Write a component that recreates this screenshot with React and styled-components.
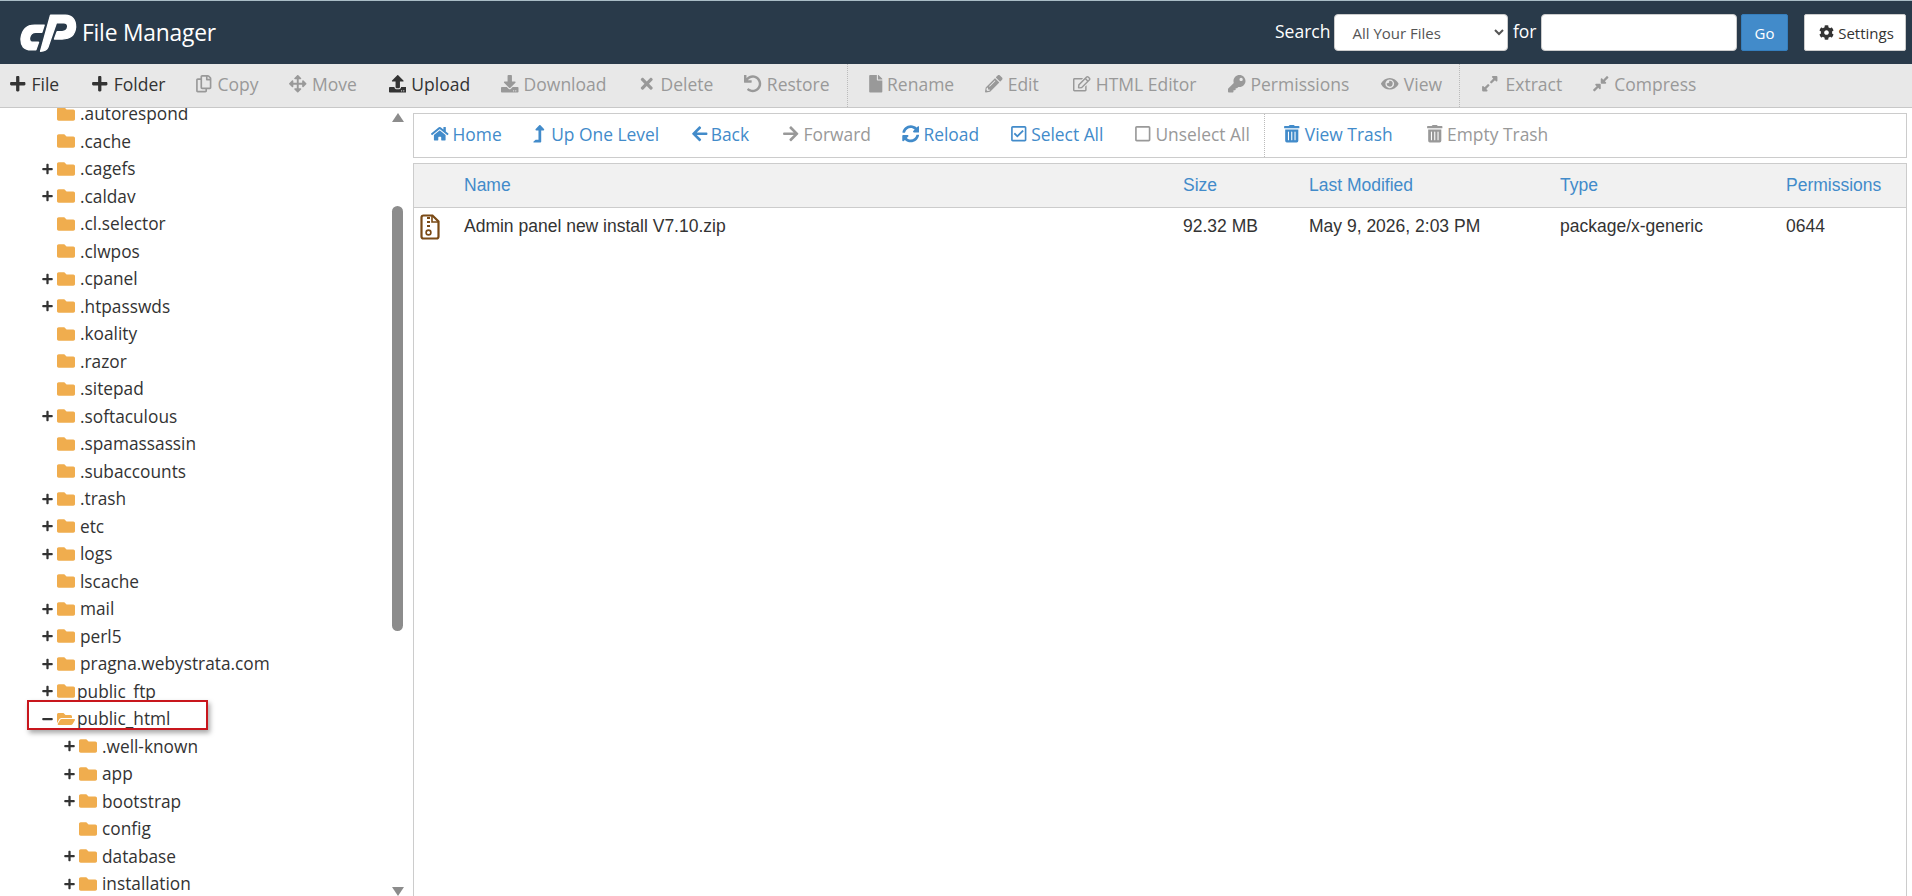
import React from "react";
import styled, { createGlobalStyle } from "styled-components";
import {
  FaArrowLeft,
  FaArrowRight,
  FaArrowsAlt,
  FaCog,
  FaCompressAlt,
  FaDownload,
  FaExpandAlt,
  FaEye,
  FaFile,
  FaFolder,
  FaFolderOpen,
  FaHome,
  FaKey,
  FaLevelUpAlt,
  FaMinus,
  FaPencilAlt,
  FaPlus,
  FaRegCheckSquare,
  FaRegCopy,
  FaRegEdit,
  FaRegSquare,
  FaSyncAlt,
  FaTimes,
  FaTrashAlt,
  FaUndo,
  FaUpload,
} from "react-icons/fa";

const GlobalStyle = createGlobalStyle`
  html, body { margin: 0; padding: 0; height: 100%; background: #fff; overflow: hidden; }
  body { font-family: "Open Sans", "Liberation Sans", sans-serif; color: #333; }
`;

const Page = styled.div`
  height: 896px;
  display: flex;
  flex-direction: column;
  overflow: hidden;
`;

const Header = styled.header`
  height: 64px;
  box-sizing: border-box;
  flex: none;
  display: flex;
  align-items: center;
  padding: 0 6px 0 20px;
  background: #293a4a;
  border-top: 1px solid #a9bcc6;
  color: #fff;
`;

const Title = styled.h1`
  margin: 0 0 0 5px;
  font-size: 22.8px;
  font-weight: 400;
  letter-spacing: -0.2px;
`;

const SearchForm = styled.div`
  margin-left: auto;
  display: flex;
  align-items: center;
  font-size: 17.5px;
`;

const SearchLabel = styled.span`
  margin: ${(p) => p.$margin};
  position: relative;
  top: -2px;
`;

const ScopeSelect = styled.select`
  width: 174px;
  height: 37px;
  box-sizing: border-box;
  padding: 0 6px 0 13px;
  background: #fff;
  border: 1px solid #ccc;
  border-radius: 4px;
  color: #555;
  font: 15px "Open Sans", sans-serif;
`;

const SearchInput = styled.input`
  width: 196px;
  height: 37px;
  box-sizing: border-box;
  background: #fff;
  border: 1px solid #ccc;
  border-radius: 4px;
`;

const GoButton = styled.button`
  width: 47px;
  height: 37px;
  margin-left: 4px;
  background: #428bca;
  border: 1px solid #357ebd;
  border-radius: 2px;
  color: #fff;
  font: 15px "Open Sans", sans-serif;
`;

const SettingsButton = styled.button`
  width: 102px;
  height: 37px;
  margin-left: 16px;
  padding-left: 9px;
  display: flex;
  align-items: center;
  justify-content: center;
  gap: 4px;
  background: #fff;
  border: 1px solid #ccc;
  border-radius: 2px;
  color: #333;
  font: 15px "Open Sans", sans-serif;
`;

const Toolbar = styled.nav`
  height: 44px;
  box-sizing: border-box;
  flex: none;
  display: flex;
  align-items: center;
  padding: 0 0 0 9px;
  background: #e8e8e8;
  border-bottom: 1px solid #c8c8c8;
`;

const ToolButton = styled.button`
  height: 100%;
  padding: 0 0 3px;
  margin-right: ${(p) => p.$gap}px;
  display: flex;
  align-items: center;
  gap: ${(p) => p.$iconGap ?? 5}px;
  background: none;
  border: 0;
  color: ${(p) => (p.disabled ? "#999" : "#333")};
  font: 17.5px "Open Sans", sans-serif;
  svg { font-size: 17.5px; flex: none; }
`;

const ToolDivider = styled.span`
  align-self: stretch;
  width: 0;
  margin: 0 ${(p) => p.$after}px 0 0;
  border-left: 1px dotted #bbb;
`;

const Workspace = styled.div`
  flex: 1;
  min-height: 0;
  display: flex;
`;

const TreePane = styled.aside`
  position: relative;
  width: 387px;
  flex: none;
  overflow: hidden;
`;

const TreeList = styled.ul`
  list-style: none;
  margin: -8px 0 0;
  padding: 0;
`;

const TreeRow = styled.li`
  height: 27.5px;
  display: flex;
  align-items: center;
  padding-left: ${(p) => 42 + p.$depth * 22}px;
  font-size: 17.3px;
  white-space: nowrap;
`;

const Toggle = styled.span`
  width: 11px;
  margin-right: 4px;
  flex: none;
  display: flex;
  color: #333;
  font-size: 12px;
`;

const FolderGlyph = styled.span`
  width: 18px;
  margin-right: ${(p) => (p.$tight ? 2 : 5)}px;
  flex: none;
  display: flex;
  color: #f0ad4e;
  font-size: 18px;
`;

const Highlight = styled.div`
  position: absolute;
  left: 27px;
  top: 592px;
  width: 181px;
  height: 30px;
  box-sizing: border-box;
  border: 2px solid #c8161d;
  box-shadow: 2px 3px 5px rgba(0, 0, 0, 0.35);
`;

const ScrollRail = styled.div`
  width: 21px;
  flex: none;
  display: flex;
  flex-direction: column;
  align-items: center;
  background: #fff;
`;

const ScrollArrow = styled.span`
  width: 0;
  height: 0;
  margin: ${(p) => (p.$down ? "auto 0 0" : "5px 0 0")};
  border-left: 6.5px solid transparent;
  border-right: 6.5px solid transparent;
  border-${(p) => (p.$down ? "top" : "bottom")}: 9px solid #8c8c8c;
`;

const ScrollThumb = styled.span`
  width: 11px;
  height: 425px;
  margin-top: 84px;
  background: #8c8c8c;
  border-radius: 5.5px;
`;

const Main = styled.main`
  flex: 1;
  min-width: 0;
  padding: 5px 5px 0;
  display: flex;
  flex-direction: column;
  gap: 5px;
`;

const Breadcrumb = styled.div`
  height: 45px;
  box-sizing: border-box;
  flex: none;
  display: flex;
  align-items: center;
  padding-left: 17px;
  border: 1px solid #ccc;
`;

const CrumbLink = styled.a`
  height: 100%;
  box-sizing: border-box;
  padding-bottom: 3px;
  margin-right: ${(p) => p.$gap}px;
  display: flex;
  align-items: center;
  gap: ${(p) => p.$iconGap ?? 4}px;
  color: ${(p) => (p.$off ? "#999" : "#428bca")};
  font-size: 17.4px;
  svg { font-size: 17.5px; flex: none; }
`;

const FileTable = styled.div`
  flex: 1;
  border: 1px solid #ccc;
  border-bottom: 0;
  font-family: "Liberation Sans", Arial, sans-serif;
  font-size: 17.5px;
`;

const Columns = styled.div`
  display: grid;
  grid-template-columns: 50px 719px 126px 251px 226px 1fr;
  align-items: center;
`;

const HeadRow = styled(Columns)`
  height: 43px;
  background: #f1f1f1;
  border-bottom: 1px solid #ccc;
  color: #428bca;
`;

const FileRow = styled(Columns)`
  height: 38px;
  padding-bottom: 2px;
  box-sizing: border-box;
  color: #333;
`;

const FileIcon = styled.svg`
  width: 20px;
  height: 26px;
  margin: 1px 0 0 6px;
  color: #7a4a16;
`;

const CpanelLogo = () => (
  <svg width="57" height="40" viewBox="28 26 172 116" fill="#fff" stroke="#fff" strokeWidth="4" strokeLinejoin="round" aria-label="cPanel">
    <path d="M101 60 L72 60 Q36 60 31 100 Q29 135 62 135 L76 135 L84 112 L68 112 Q55 112 57 98 Q60 82 76 82 L94 82 Z" />
    <path d="M120 30 L165 30 Q196 32 196 66 Q193 102 155 102 L132 102 L140 80 L155 80 Q170 80 172 65 Q172 53 160 53 L138 53 L112 128 Q107 139 90 139 Z" />
  </svg>
);

const ZipIcon = () => (
  <FileIcon viewBox="0 0 20 26">
    <path d="M1.5 3.5 Q1.5 1.5 3.5 1.5 L12.5 1.5 L18.5 7.5 L18.5 22.5 Q18.5 24.5 16.5 24.5 L3.5 24.5 Q1.5 24.5 1.5 22.5 Z" fill="#fff" stroke="currentColor" strokeWidth="2.2" />
    <path d="M12 2 L12 8 L18 8" fill="none" stroke="currentColor" strokeWidth="1.6" />
    <path d="M7 3 h3 v2 h-3 z M7 7 h3 v2 h-3 z M7 11 h3 v2 h-3 z" fill="currentColor" />
    <circle cx="8.5" cy="18.5" r="2.4" fill="none" stroke="currentColor" strokeWidth="1.6" />
  </FileIcon>
);

const tools = [
  { icon: FaPlus, label: "File", gap: 32 },
  { icon: FaPlus, label: "Folder", gap: 29.5 },
  { icon: FaRegCopy, label: "Copy", off: true, gap: 31 },
  { icon: FaArrowsAlt, label: "Move", off: true, gap: 32 },
  { icon: FaUpload, label: "Upload", gap: 31 },
  { icon: FaDownload, label: "Download", off: true, gap: 31.5 },
  { icon: FaTimes, label: "Delete", off: true, gap: 31 },
  { icon: FaUndo, label: "Restore", off: true, gap: 17, divide: 19 },
  { icon: FaFile, label: "Rename", off: true, gap: 31, iconGap: 3 },
  { icon: FaPencilAlt, label: "Edit", off: true, gap: 34.5 },
  { icon: FaRegEdit, label: "HTML Editor", off: true, gap: 31.5 },
  { icon: FaKey, label: "Permissions", off: true, gap: 32 },
  { icon: FaEye, label: "View", off: true, gap: 17, divide: 21 },
  { icon: FaExpandAlt, label: "Extract", off: true, gap: 29.5, iconGap: 7 },
  { icon: FaCompressAlt, label: "Compress", off: true, gap: 0 },
];

const crumbs = [
  { icon: FaHome, label: "Home", gap: 28 },
  { icon: FaLevelUpAlt, label: "Up One Level", gap: 32 },
  { icon: FaArrowLeft, label: "Back", gap: 33, iconGap: 2 },
  { icon: FaArrowRight, label: "Forward", off: true, gap: 31 },
  { icon: FaSyncAlt, label: "Reload", gap: 30.5 },
  { icon: FaRegCheckSquare, label: "Select All", gap: 30.5 },
  { icon: FaRegSquare, label: "Unselect All", off: true, gap: 14.5, divide: 18 },
  { icon: FaTrashAlt, label: "View Trash", gap: 33 },
  { icon: FaTrashAlt, label: "Empty Trash", off: true, gap: 0 },
];

const tree = [
  [".autorespond", 0],
  [".cache", 0],
  [".cagefs", 0, "closed"],
  [".caldav", 0, "closed"],
  [".cl.selector", 0],
  [".clwpos", 0],
  [".cpanel", 0, "closed"],
  [".htpasswds", 0, "closed"],
  [".koality", 0],
  [".razor", 0],
  [".sitepad", 0],
  [".softaculous", 0, "closed"],
  [".spamassassin", 0],
  [".subaccounts", 0],
  [".trash", 0, "closed"],
  ["etc", 0, "closed"],
  ["logs", 0, "closed"],
  ["lscache", 0],
  ["mail", 0, "closed"],
  ["perl5", 0, "closed"],
  ["pragna.webystrata.com", 0, "closed"],
  ["public_ftp", 0, "closed", true],
  ["public_html", 0, "open", true],
  [".well-known", 1, "closed"],
  ["app", 1, "closed"],
  ["bootstrap", 1, "closed"],
  ["config", 1],
  ["database", 1, "closed"],
  ["installation", 1, "closed"],
];

export default function App() {
  return (
    <Page>
      <GlobalStyle />
      <Header>
        <CpanelLogo />
        <Title>File Manager</Title>
        <SearchForm>
          <SearchLabel $margin="0 4px 0 0">Search</SearchLabel>
          <ScopeSelect defaultValue="all">
            <option value="all">All Your Files</option>
          </ScopeSelect>
          <SearchLabel $margin="0 4.5px">for</SearchLabel>
          <SearchInput />
          <GoButton>Go</GoButton>
          <SettingsButton>
            <FaCog /> Settings
          </SettingsButton>
        </SearchForm>
      </Header>
      <Toolbar>
        {tools.map(({ icon: Icon, label, off, gap, divide, iconGap }) => (
          <React.Fragment key={label}>
            <ToolButton disabled={off} $gap={gap} $iconGap={iconGap}>
              <Icon /> {label}
            </ToolButton>
            {divide && <ToolDivider $after={divide} />}
          </React.Fragment>
        ))}
      </Toolbar>
      <Workspace>
        <TreePane>
          <TreeList>
            {tree.map(([name, depth, state, tight]) => (
              <TreeRow key={name} $depth={depth}>
                <Toggle>
                  {state === "closed" && <FaPlus />}
                  {state === "open" && <FaMinus />}
                </Toggle>
                <FolderGlyph $tight={tight}>{state === "open" ? <FaFolderOpen /> : <FaFolder />}</FolderGlyph>
                {name}
              </TreeRow>
            ))}
          </TreeList>
          <Highlight />
        </TreePane>
        <ScrollRail>
          <ScrollArrow />
          <ScrollThumb />
          <ScrollArrow $down />
        </ScrollRail>
        <Main>
          <Breadcrumb>
            {crumbs.map(({ icon: Icon, label, off, gap, divide, iconGap }) => (
              <React.Fragment key={label}>
                <CrumbLink $off={off} $gap={gap} $iconGap={iconGap}>
                  <Icon /> {label}
                </CrumbLink>
                {divide && <ToolDivider $after={divide} />}
              </React.Fragment>
            ))}
          </Breadcrumb>
          <FileTable>
            <HeadRow>
              <span />
              <span>Name</span>
              <span>Size</span>
              <span>Last Modified</span>
              <span>Type</span>
              <span>Permissions</span>
            </HeadRow>
            <FileRow>
              <ZipIcon />
              <span>Admin panel new install V7.10.zip</span>
              <span>92.32 MB</span>
              <span>May 9, 2026, 2:03 PM</span>
              <span>package/x-generic</span>
              <span>0644</span>
            </FileRow>
          </FileTable>
        </Main>
      </Workspace>
    </Page>
  );
}
